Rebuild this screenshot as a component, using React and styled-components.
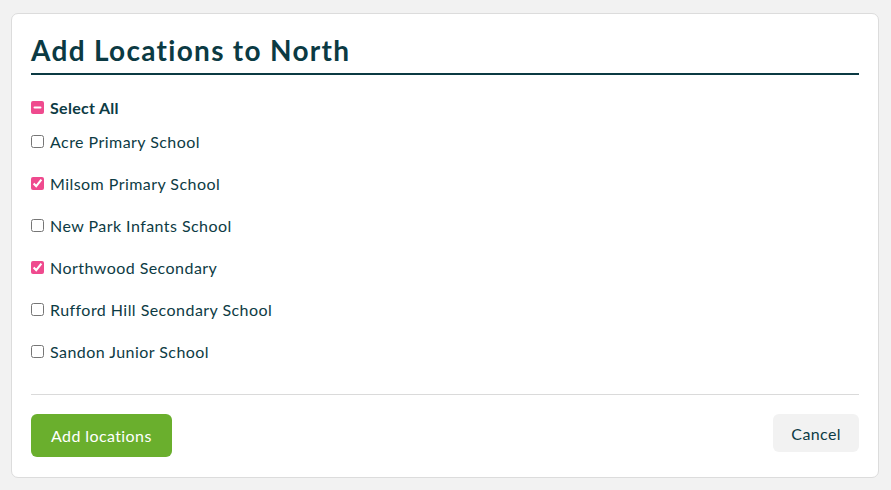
import { useEffect, useRef, useState } from "react";
import styled, { createGlobalStyle } from "styled-components";

const GlobalStyle = createGlobalStyle`
  body {
    margin: 0;
    background: #f2f2f2;
    font-family: "Lato", "Noto Sans", sans-serif;
    color: #0d3b44;
  }
`;

const Page = styled.div`
  padding: 13px 12px 13px 11px;
`;

const Card = styled.div`
  background: #fff;
  border: 1px solid #dcdcdc;
  border-radius: 7px;
  padding: 19px 19px 20px 19px;
`;

const Title = styled.h2`
  margin: 0;
  font-size: 28px;
  line-height: 34px;
  font-weight: 700;
  letter-spacing: 1.3px;
  color: #0b3a43;
  padding-bottom: 6px;
  border-bottom: 2px solid #0b3a43;
`;

const List = styled.div`
  display: flex;
  flex-direction: column;
  gap: 22px;
  margin-top: 22px;
`;

const Row = styled.label`
  display: flex;
  align-items: center;
  gap: 6px;
  height: 20px;
  font-size: 16px;
  letter-spacing: ${(p) => (p.$bold ? "0.3px" : "0.45px")};
  font-weight: ${(p) => (p.$bold ? 700 : 400)};
  margin-bottom: ${(p) => (p.$bold ? "-8px" : "0")};
  cursor: pointer;
`;

const Box = styled.input`
  margin: 0;
  width: 13px;
  height: 13px;
  accent-color: #ef4a8e;
`;

const Divider = styled.hr`
  border: 0;
  border-top: 1px solid #dadada;
  margin: 33px 0 19px;
`;

const Footer = styled.div`
  display: flex;
  justify-content: space-between;
  align-items: flex-start;
`;

const PrimaryButton = styled.button`
  background: #6aaf2d;
  color: #fff;
  border: 0;
  border-radius: 6px;
  height: 43px;
  padding: 0 20px;
  font-family: inherit;
  font-size: 16px;
  letter-spacing: 0.4px;
  cursor: pointer;
`;

const GhostButton = styled.button`
  background: #f2f2f2;
  color: #0d3b44;
  border: 0;
  border-radius: 6px;
  height: 38px;
  padding: 0 18px;
  font-family: inherit;
  font-size: 16px;
  letter-spacing: 0.4px;
  cursor: pointer;
`;

const schools = [
  { name: "Acre Primary School", checked: false },
  { name: "Milsom Primary School", checked: true },
  { name: "New Park Infants School", checked: false },
  { name: "Northwood Secondary", checked: true },
  { name: "Rufford Hill Secondary School", checked: false },
  { name: "Sandon Junior School", checked: false },
];

const App = () => {
  const [items, setItems] = useState(schools);
  const allRef = useRef(null);
  const count = items.filter((s) => s.checked).length;

  useEffect(() => {
    if (allRef.current) {
      allRef.current.indeterminate = count > 0 && count < items.length;
    }
  }, [count, items.length]);

  const toggle = (i) =>
    setItems(items.map((s, j) => (j === i ? { ...s, checked: !s.checked } : s)));

  const toggleAll = () => {
    const next = count !== items.length;
    setItems(items.map((s) => ({ ...s, checked: next })));
  };

  return (
    <Page>
      <GlobalStyle />
      <Card>
        <Title>Add Locations to North</Title>
        <List>
          <Row $bold>
            <Box
              type="checkbox"
              ref={allRef}
              checked={count === items.length}
              onChange={toggleAll}
            />
            Select All
          </Row>
          {items.map((s, i) => (
            <Row key={s.name}>
              <Box type="checkbox" checked={s.checked} onChange={() => toggle(i)} />
              {s.name}
            </Row>
          ))}
        </List>
        <Divider />
        <Footer>
          <PrimaryButton>Add locations</PrimaryButton>
          <GhostButton>Cancel</GhostButton>
        </Footer>
      </Card>
    </Page>
  );
};

export default App;
